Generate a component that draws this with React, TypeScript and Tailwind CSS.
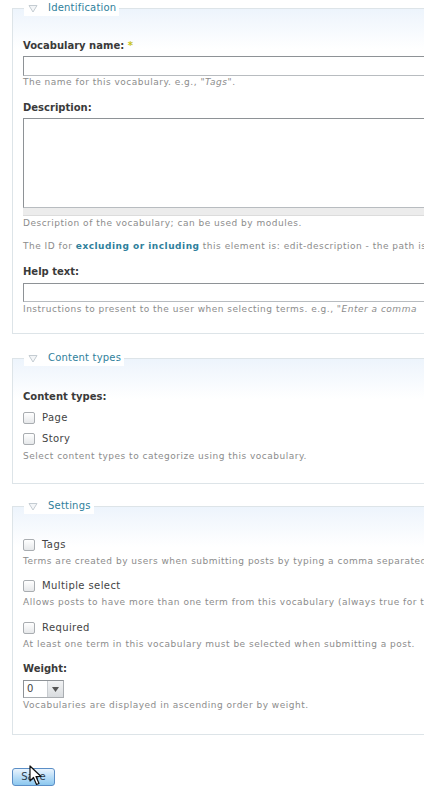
import React from 'react'

const desc = 'text-[9px] leading-[14px] tracking-[0.5px] text-[#8c8c8c] whitespace-nowrap'
const label = 'text-[10px] leading-[14px] font-bold text-[#3a3a3a] whitespace-nowrap'

function Legend({ title }: { title: string }) {
  return (
    <legend className="ml-[11px] pl-[4px] pr-[3px] h-[16px] flex items-center bg-white">
      <svg width="10" height="9" viewBox="0 0 10 9" className="mr-[10px]">
        <path d="M1 1.5 L9 1.5 L5 8 Z" fill="#f4f6f8" stroke="#c4ccd2" strokeWidth="1" />
      </svg>
      <span className="text-[10px] leading-[16px] tracking-[0.2px] text-[#2f7f9c]">{title}</span>
    </legend>
  )
}

function Checkbox({ text }: { text: string }) {
  return (
    <div className="flex items-center h-[14px]">
      <span className="w-[12px] h-[12px] rounded-[2px] border border-[#a9adb1] bg-gradient-to-b from-white to-[#e6e8ea]" />
      <span className="ml-[7px] text-[10px] leading-[14px] tracking-[0.4px] text-[#444]">{text}</span>
    </div>
  )
}

function Field({ children, className = '' }: { children: React.ReactNode; className?: string }) {
  return (
    <fieldset
      className={`w-[470px] border-t border-l border-b border-[#dde4e8] bg-[linear-gradient(to_bottom,#edf4fc_0px,#ffffff_40px)] ${className}`}
    >
      {children}
    </fieldset>
  )
}

export default function App() {
  return (
    <div className="relative w-[424px] h-[799px] overflow-hidden bg-white font-['DejaVu_Sans',sans-serif] pl-[12px]">
      {/* Identification */}
      <Field>
        <Legend title="Identification" />
        <div className="pl-[10px] pt-[23px] pb-[17px]">
          <div className={label}>
            Vocabulary name: <span className="text-[#c8c420]">*</span>
          </div>
          <div className="mt-[3px] h-[20px] border border-[#b8bcc0] border-t-[#8e9296] border-l-[#8e9296] bg-white" />
          <div className={`${desc} mt-[-1px]`}>
            The name for this vocabulary. e.g., "<em>Tags</em>".
          </div>

          <div className={`${label} mt-[12px]`}>Description:</div>
          <div className="mt-[3px] h-[90px] border border-[#b8bcc0] border-t-[#8e9296] border-l-[#8e9296] bg-white" />
          <div className="h-[8px] bg-[#ececec] border-b border-[#dcdcdc]" />
          <div className={desc}>Description of the vocabulary; can be used by modules.</div>

          <div className={`${desc} mt-[9px]`}>
            The ID for <span className="font-bold text-[#2f7f9c]">excluding or including</span> this element is:
            edit-description - the path is
          </div>

          <div className={`${label} mt-[12px]`}>Help text:</div>
          <div className="mt-[4px] h-[19px] border border-[#b8bcc0] border-t-[#8e9296] border-l-[#8e9296] bg-white" />
          <div className={desc}>
            Instructions to present to the user when selecting terms. e.g., "<em>Enter a comma</em>
          </div>
        </div>
      </Field>

      {/* Content types */}
      <Field className="mt-[16px]">
        <Legend title="Content types" />
        <div className="pl-[10px] pt-[24px] pb-[20px]">
          <div className={label}>Content types:</div>
          <div className="mt-[7px]">
            <Checkbox text="Page" />
          </div>
          <div className="mt-[7px]">
            <Checkbox text="Story" />
          </div>
          <div className={`${desc} mt-[3px]`}>Select content types to categorize using this vocabulary.</div>
        </div>
      </Field>

      {/* Settings */}
      <Field className="mt-[14px]">
        <Legend title="Settings" />
        <div className="pl-[10px] pt-[24px] pb-[22px]">
          <Checkbox text="Tags" />
          <div className={`${desc} mt-[2px]`}>
            Terms are created by users when submitting posts by typing a comma separated list.
          </div>
          <div className="mt-[11px]">
            <Checkbox text="Multiple select" />
          </div>
          <div className={`${desc} mt-[2px]`}>
            Allows posts to have more than one term from this vocabulary (always true for tags).
          </div>
          <div className="mt-[12px]">
            <Checkbox text="Required" />
          </div>
          <div className={`${desc} mt-[2px]`}>
            At least one term in this vocabulary must be selected when submitting a post.
          </div>
          <div className={`${label} mt-[11px]`}>Weight:</div>
          <div className="mt-[4px] w-[41px] h-[18px] flex border border-[#a9adb1] border-t-[#8e9296] border-l-[#8e9296] bg-white">
            <span className="flex-1 pl-[3px] text-[10px] leading-[16px] text-[#444]">0</span>
            <span className="w-[16px] flex items-center justify-center bg-gradient-to-b from-[#f2f3f4] to-[#d9dcdf] border-l border-[#c8ccd0]">
              <svg width="7" height="5" viewBox="0 0 7 5">
                <path d="M0 0 L7 0 L3.5 5 Z" fill="#555" />
              </svg>
            </span>
          </div>
          <div className={desc}>Vocabularies are displayed in ascending order by weight.</div>
        </div>
      </Field>

      <div className="mt-[28px]">
        <button className="relative w-[43px] h-[18px] rounded-[3px] border border-[#5b8ec6] bg-gradient-to-b from-[#eaf4fd] via-[#b9ddf7] to-[#8cc8ef] text-[10px] leading-[14px] text-[#2d3d4d]">
          Save
          <svg
            width="14"
            height="22"
            viewBox="0 0 14 22"
            className="absolute left-[16px] top-[-4px]"
          >
            <path
              d="M1 1 L1 16 L4.5 12.5 L7.5 19.5 L10 18.5 L7 11.5 L12 11.5 Z"
              fill="#ffffff"
              stroke="#111"
              strokeWidth="1.2"
              strokeLinejoin="round"
            />
          </svg>
        </button>
      </div>
    </div>
  )
}
